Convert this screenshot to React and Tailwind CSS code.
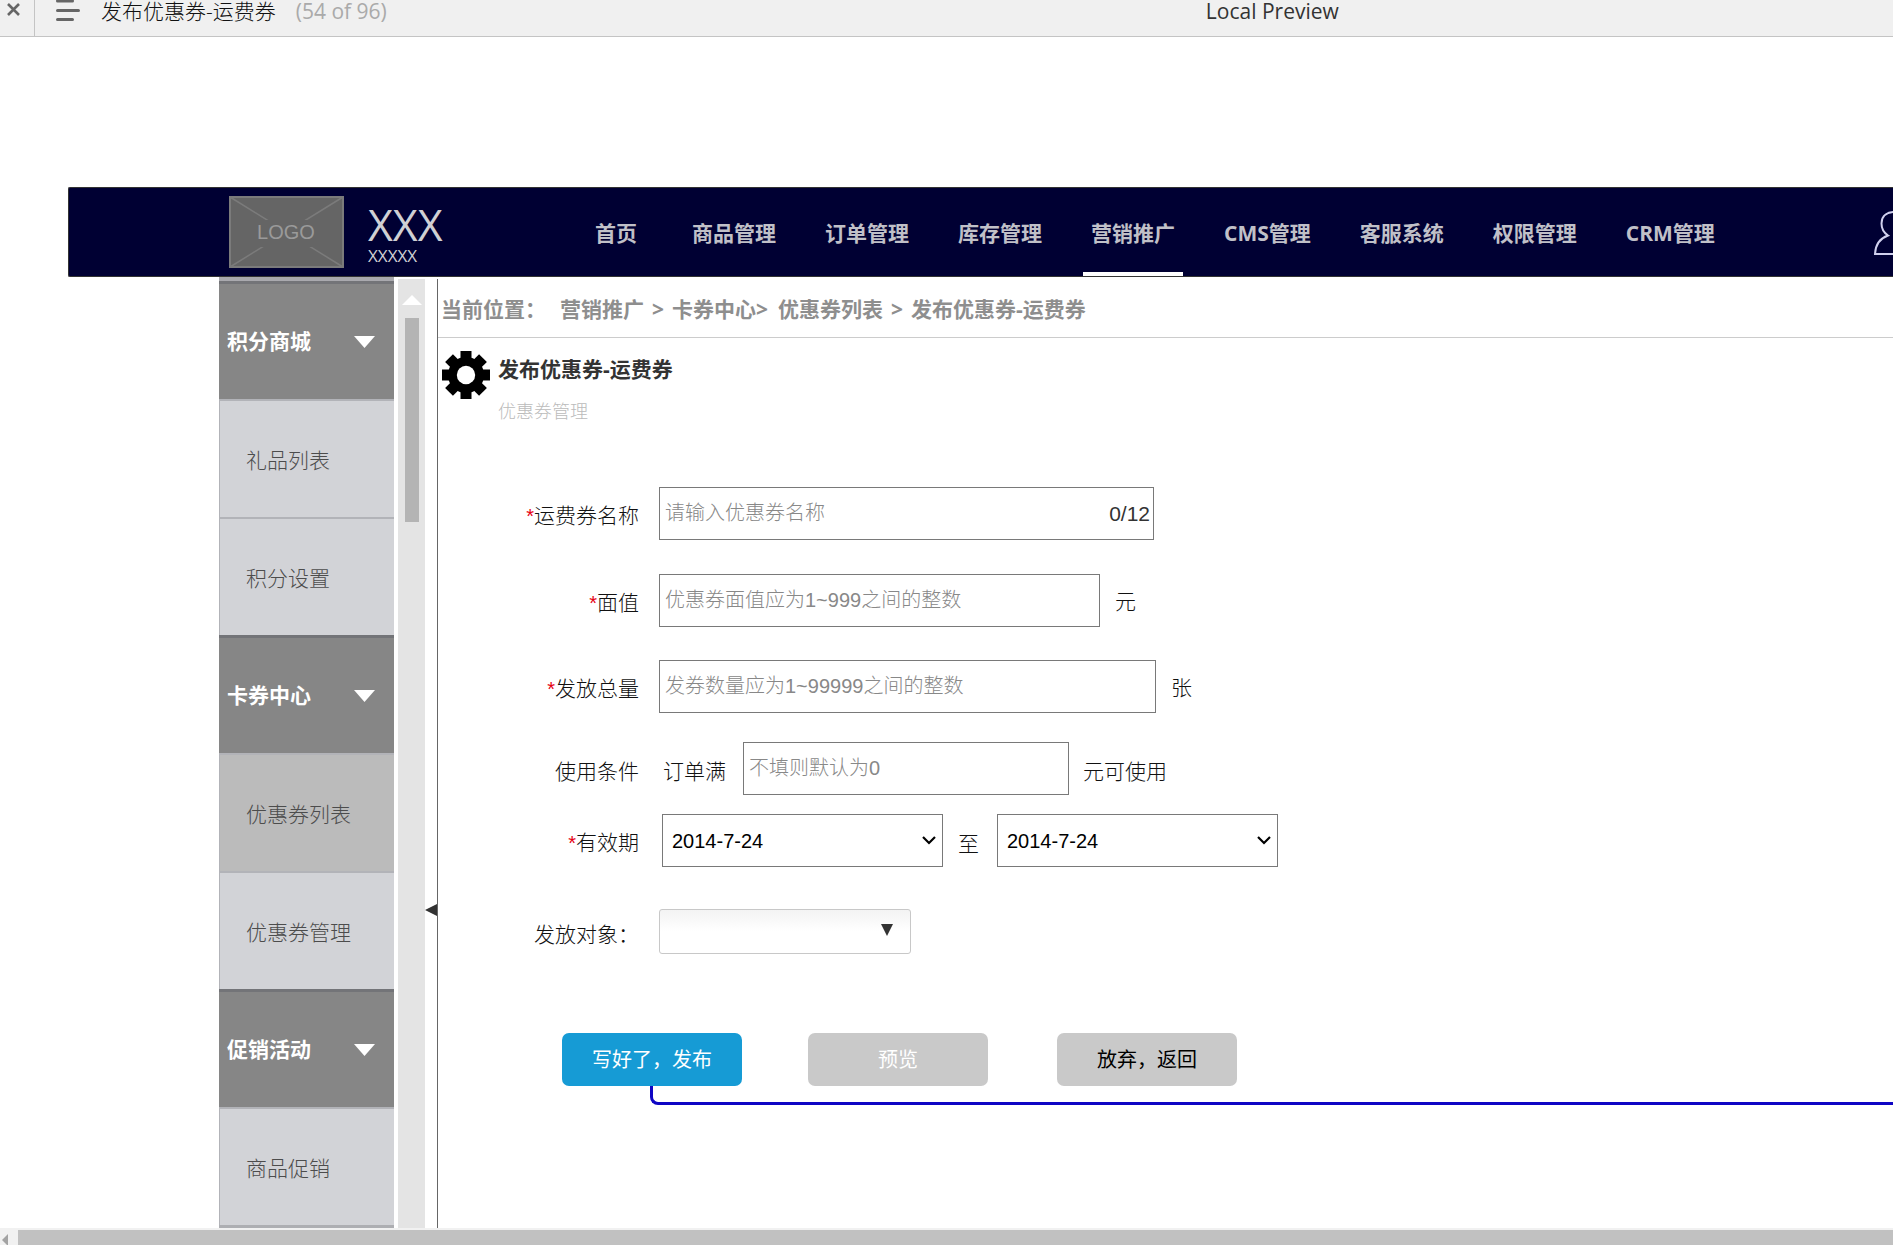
import React from "react";

const UI = "font-['Open_Sans','Noto_Sans_CJK_SC',sans-serif]";
const FORM = "font-['Liberation_Sans','Noto_Sans_CJK_SC',sans-serif]";

const NAV = ["首页", "商品管理", "订单管理", "库存管理", "营销推广", "CMS管理", "客服系统", "权限管理", "CRM管理"];

const MENU = [
  { text: "积分商城", kind: "group" },
  { text: "礼品列表", kind: "item" },
  { text: "积分设置", kind: "item" },
  { text: "卡券中心", kind: "group" },
  { text: "优惠券列表", kind: "current" },
  { text: "优惠券管理", kind: "item" },
  { text: "促销活动", kind: "group" },
  { text: "商品促销", kind: "item" },
];

function Gear() {
  return (
    <svg viewBox="-24 -24 48 48" className="size-12 shrink-0" aria-hidden="true">
      {[0, 45, 90, 135].map((a) => (
        <rect key={a} x="-5.5" y="-24" width="11" height="48" transform={`rotate(${a})`} />
      ))}
      <circle r="18" />
      <circle r="9.2" fill="#fff" />
    </svg>
  );
}

function TopBar() {
  return (
    <header className="flex h-[37px] shrink-0 items-start border-b border-[#c4c4c4] bg-[#f0f0f0]">
      <button aria-label="关闭" className="flex h-9 w-[35px] shrink-0 items-start border-r border-[#c4c4c4] pt-[3px] pl-[7px]">
        <svg viewBox="0 0 13 13" className="size-[13px]" fill="none" stroke="#666" strokeWidth="2.6">
          <path d="M1 1l11 11M12 1L1 12" />
        </svg>
      </button>
      <button aria-label="页面列表" className="ml-[21px] w-6 shrink-0">
        <svg viewBox="0 0 24 22" className="h-[22px] w-6" fill="none" stroke="#666" strokeWidth="3" strokeLinecap="round">
          <path d="M1.5 1h15M1.5 10.500h21M1.5 19.500h15" />
        </svg>
      </button>
      <div className="flex flex-1 whitespace-nowrap pl-[21px] text-[21px] leading-[22px]">
        <h1 className="font-light text-[#111]">发布优惠券-运费券</h1>
        <span className="ml-5 text-[#aaa]">(54 of 96)</span>
      </div>
      <div className="w-[36.300%] whitespace-nowrap text-[21px] leading-[22px] text-[#333]">Local Preview</div>
    </header>
  );
}

function NavBar() {
  return (
    <div className="ml-[68px] flex h-[90px] shrink-0 overflow-hidden rounded-l-xs border-y border-l border-[#333] bg-[#000033] pl-40">
      <svg viewBox="0 0 115 72" className="mt-2 h-[72px] w-[115px] shrink-0">
        <rect x="1" y="1" width="113" height="70" fill="#656565" stroke="#7b7b7b" strokeWidth="2" />
        <path d="M1 1l113 70M114 1L1 71" stroke="#7b7b7b" strokeWidth="1.500" />
        <rect x="27" y="24" width="60" height="27" fill="#656565" />
        <text x="57" y="43" textAnchor="middle" fontSize="20" fill="#9a9a9a" fontFamily="Liberation Sans, sans-serif">LOGO</text>
      </svg>
      <div className="ml-6 w-[219px] shrink-0 pt-4 text-[#d0d0d4]">
        <div className="text-[43px] leading-[42px]">XXX</div>
        <div className="text-[17px] leading-5">XXXXX</div>
      </div>
      <nav className="flex gap-[33px]">
        {NAV.map((t, i) => (
          <a
            key={t}
            href="#"
            className={
              "flex h-[88px] items-center whitespace-nowrap border-b-4 px-2 pt-1.5 text-[21px] font-bold leading-7 text-[#c0c0c8] " +
              (t === "营销推广" ? "border-white " : "border-transparent ") +
              (i === 0 ? "mr-1.5" : "")
            }
          >
            {t}
          </a>
        ))}
      </nav>
      <button aria-label="用户" className="-mr-8 ml-auto mt-[23px] h-11 w-[51px] shrink-0">
        <svg viewBox="0 0 51 44" className="h-11 w-[51px]" fill="none" stroke="#d0d0ee" strokeWidth="2">
          <path d="M1 43C1.500 33 5.500 27.500 14 24.500C9.500 21.500 7.500 17.500 7.500 12.500C7.500 4 14 1 21 1h9C37 1 43.500 4 43.500 12.500C43.500 17.500 41.500 21.500 37 24.500C45.500 27.500 49.500 33 50 43Z" />
        </svg>
      </button>
    </div>
  );
}

function SideBar() {
  return (
    <aside className="flex shrink-0">
      <ul className="w-[175px] overflow-hidden border-t-4 border-[#a9a9ae]">
        {MENU.map((m) =>
          m.kind === "group" ? (
            <li key={m.text}>
              <button className="flex h-[118px] w-full items-center justify-between border-t-3 border-[#737478] bg-[#868686] pl-2 pr-[19px] text-[21px] font-bold text-white">
                {m.text}
                <svg viewBox="0 0 21 12" className="h-3 w-[21px]" fill="#fff" aria-hidden="true">
                  <path d="M0 0h21L10.500 12z" />
                </svg>
              </button>
            </li>
          ) : (
            <li key={m.text}>
              <a
                href="#"
                className={
                  "flex h-[118px] items-center border-l border-t-2 border-[#b2b3b8] pl-[26px] pt-1 text-[21px] font-light text-[#4c4c4c] " +
                  (m.kind === "current" ? "bg-[#bbbbbb]" : "bg-[#d2d3d7]")
                }
              >
                {m.text}
              </a>
            </li>
          )
        )}
        <li className="h-[3px] bg-[#adaeb2]" />
      </ul>
      <div className="ml-1 mt-0.5 flex w-[27px] flex-col items-center bg-[#e4e4e4]">
        <svg viewBox="0 0 20 10" className="mt-4 h-2.5 w-5" fill="#fff" aria-hidden="true">
          <path d="M0 10h20L10 0z" />
        </svg>
        <div className="mt-[13px] h-[204px] w-3.5 bg-[#b4b4b4]" />
      </div>
      <button aria-label="收起菜单" className="mt-0.5 flex w-[13px] justify-end border-r border-[#666] pt-[625px]">
        <svg viewBox="0 0 12 12" className="h-3 w-3" fill="#333">
          <path d="M12 0v12L0 6z" />
        </svg>
      </button>
    </aside>
  );
}

function Row({ id, label, required, className, children }) {
  return (
    <div className={"flex items-center " + className}>
      <label htmlFor={id} className="w-[221px] shrink-0 pr-5 pt-1 text-right text-[21px] font-light leading-7 text-[#111]">
        {required && <span className={"text-xl font-normal text-[#e60012] " + FORM}>*</span>}
        {label}
      </label>
      {children}
    </div>
  );
}

const FIELD = "h-[53px] border border-[#797979] bg-white px-[5px] text-xl font-light outline-none placeholder:text-[#888] " + FORM;
const UNIT = "text-[21px] font-light leading-7 text-[#111]";

function DateSelect({ id, label }) {
  return (
    <div className="relative w-[281px]">
      <select id={id} aria-label={label} className={"h-[53px] w-full appearance-none border border-[#797979] bg-white px-[9px] text-xl text-black " + FORM}>
        <option>2014-7-24</option>
      </select>
      <svg viewBox="0 0 14 9" className="pointer-events-none absolute right-[7px] top-[22px] h-[9px] w-3.5" fill="none" stroke="#000" strokeWidth="2.200">
        <path d="M1 1l6 6 6-6" />
      </svg>
    </div>
  );
}

function CouponForm() {
  return (
    <form className="pt-[62px] text-[#333]">
      <Row id="name" label="运费券名称" required className="">
        <div className="flex h-[53px] w-[495px] items-center border border-[#797979] pr-[3px]">
          <input id="name" placeholder="请输入优惠券名称" className={"h-full min-w-0 flex-1 px-[5px] text-xl font-light outline-none placeholder:text-[#888] " + FORM} />
          <span className={"text-[21px] " + FORM}>0/12</span>
        </div>
      </Row>
      <Row id="value" label="面值" required className="mt-[34px]">
        <input id="value" placeholder="优惠券面值应为1~999之间的整数" className={FIELD + " w-[441px]"} />
        <span className={"ml-[15px] " + UNIT}>元</span>
      </Row>
      <Row id="total" label="发放总量" required className="mt-[33px]">
        <input id="total" placeholder="发券数量应为1~99999之间的整数" className={FIELD + " w-[497px]"} />
        <span className={"ml-[15px] " + UNIT}>张</span>
      </Row>
      <Row id="cond" label="使用条件" className="mt-[29px]">
        <span className={"ml-1 pt-1 " + UNIT}>订单满</span>
        <input id="cond" placeholder="不填则默认为0" className={FIELD + " ml-[17px] w-[326px]"} />
        <span className={"ml-3.5 pt-1 " + UNIT}>元可使用</span>
      </Row>
      <Row id="from" label="有效期" required className="mt-[19px]">
        <div className="ml-[3px]">
          <DateSelect id="from" label="开始日期" />
        </div>
        <span className={"ml-[15px] mr-[18px] pt-1 " + UNIT}>至</span>
        <DateSelect id="to" label="结束日期" />
      </Row>
      <Row id="target" label="发放对象：" className="mt-[42px]">
        <div className="relative w-[252px]">
          <select id="target" className="h-[45px] w-full appearance-none rounded-[3px] border border-[#c8c8c8] bg-gradient-to-b from-[#f3f3f3] to-white to-50% px-2 text-xl">
            <option></option>
          </select>
          <svg viewBox="0 0 12 12" className="pointer-events-none absolute right-[18px] top-[15px] size-3" fill="#333">
            <path d="M0 0h12L6 12z" />
          </svg>
        </div>
      </Row>
      <div className="mt-[79px] flex pl-[124px] text-xl">
        <div className="relative">
          <button type="button" className="h-[53px] w-[180px] rounded-[7px] bg-[#169bd5] text-white">写好了，发布</button>
          <div className="absolute left-[88px] top-[53px] h-[19px] w-screen rounded-bl-[8px] border-b-3 border-l-3 border-[#0f05c4]" />
        </div>
        <button type="button" className="ml-[66px] h-[53px] w-[180px] rounded-[7px] bg-[#c9c9c9] text-white">预览</button>
        <button type="button" className="ml-[69px] h-[53px] w-[180px] rounded-[7px] bg-[#c9c9c9] text-black">放弃，返回</button>
      </div>
    </form>
  );
}

export default function App() {
  return (
    <div className={"flex h-screen flex-col overflow-hidden bg-white " + UI}>
      <TopBar />
      <div className="flex min-h-0 flex-1 flex-col overflow-hidden pt-[150px]">
        <NavBar />
        <div className="flex min-h-0 flex-1 pl-[219px]">
          <SideBar />
          <main className="min-w-0 flex-1 overflow-hidden">
            <div className="flex h-[61px] items-center whitespace-nowrap border-b border-[#ccc] pl-[3px] pt-1.5 text-[21px] font-bold text-[#8e8e8e]">
              <span className="mr-3.5">当前位置：</span>
              <a href="#">营销推广</a>
              <span className="mx-2">&gt;</span>
              <a href="#">卡券中心</a>
              <span className="mr-2.5">&gt;</span>
              <a href="#">优惠券列表</a>
              <span className="mx-2">&gt;</span>
              <span>发布优惠券-运费券</span>
            </div>
            <div className="flex pl-1 pt-[13px]">
              <Gear />
              <div className="ml-2">
                <h2 className="text-[21px] font-bold leading-9 text-[#333]">发布优惠券-运费券</h2>
                <p className="pt-2.5 text-lg font-light leading-7 text-[#bbb]">优惠券管理</p>
              </div>
            </div>
            <CouponForm />
          </main>
        </div>
      </div>
      <div className="flex h-[17px] shrink-0 bg-[#f1f1f1] pt-0.5">
        <svg viewBox="0 0 18 15" className="h-[15px] w-[18px] shrink-0" fill="#a3a3a3" aria-hidden="true">
          <path d="M8 4v12L2 10z" />
        </svg>
        <div className="flex-1 bg-[#c1c1c1]" />
      </div>
    </div>
  );
}
